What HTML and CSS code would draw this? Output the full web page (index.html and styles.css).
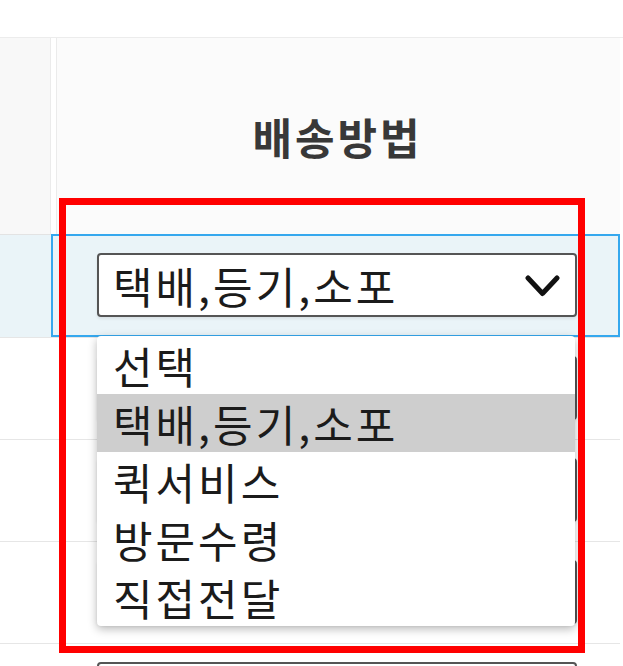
FILE: index.html
```html
<!DOCTYPE html>
<html lang="ko">
<head>
<meta charset="utf-8">
<title>배송방법</title>
<link rel="stylesheet" href="styles.css">
</head>
<body>
<div class="page">
  <div class="table">
    <div class="hcell hcell-left"></div>
    <div class="hcell hcell-main"><span class="htext">배송방법</span></div>

    <div class="cell cell-left row-active-left"></div>
    <div class="cell cell-main row-active">
      <div class="select-wrap">
        <div class="select">
          <span class="select-text">택배,등기,소포</span>
          <svg class="chev" width="35" height="22" viewBox="0 0 35 22"><polyline points="3,3 17.5,18.5 32,3" fill="none" stroke="#111" stroke-width="5" stroke-linecap="round" stroke-linejoin="round"/></svg>
        </div>
        <ul class="dropdown">
          <li class="opt">선택</li>
          <li class="opt opt-hl">택배,등기,소포</li>
          <li class="opt">퀵서비스</li>
          <li class="opt">방문수령</li>
          <li class="opt">직접전달</li>
        </ul>
      </div>
    </div>

    <div class="cell cell-left"></div>
    <div class="cell cell-main"><div class="select"></div></div>

    <div class="cell cell-left"></div>
    <div class="cell cell-main"><div class="select"></div></div>

    <div class="cell cell-left"></div>
    <div class="cell cell-main"><div class="select"></div></div>

    <div class="cell cell-left"></div>
    <div class="cell cell-main"><div class="select"></div></div>
  </div>
  <div class="annot"></div>
</div>
</body>
</html>
```

FILE: styles.css
```css
* { box-sizing: border-box; }
html, body { margin: 0; padding: 0; background: #ffffff; }
body {
  font-family: "Noto Sans CJK KR", "Noto Sans", sans-serif;
  width: 623px;
  height: 666px;
  overflow: hidden;
}
.page { position: relative; width: 623px; height: 666px; padding-top: 37px; }
.table {
  display: grid;
  grid-template-columns: 51px 569px;
  border-top: 1px solid #ececec;
}
.hcell { height: 196px; }
.hcell-left { background: #f8f8f8; border-right: 1px solid #ebebeb; }
.hcell-main {
  background: #fbfbfb;
  border-left: 1px solid #ebebeb;
  margin-left: 5px;
  display: flex;
  align-items: center;
  justify-content: center;
  padding-right: 5px;
}
.htext { font-size: 43px; font-weight: 700; color: #383838; line-height: 1; letter-spacing: 3px; margin-right: -3px; }

.cell { height: 102px; border-top: 1px solid #e6e6e6; background: #fff; }
.cell-main { padding: 18px 39px 0 46px; }
.row-active-left { background: #eaf4f8; height: 103px; border-top: 1px solid #e3e3e3; }
.row-active {
  background: #eaf4f8;
  height: 103px;
  border: 2px solid #35a8ee;
  padding: 17px 41px 0 44px;
}
.select-wrap { position: relative; }
.select {
  height: 64px;
  width: 480px;
  background: #fff;
  border: 2px solid #555;
  border-radius: 4px;
  display: flex;
  align-items: center;
  justify-content: space-between;
  padding: 0 15px 0 14px;
  box-shadow: 0 2px 3px rgba(0,0,0,0.08);
}
.select-text { font-size: 43px; color: #1b1b1b; line-height: 1; letter-spacing: 3px; }
.chev { display: block; margin-top: 2px; }

.dropdown {
  position: absolute;
  left: 0;
  top: calc(100% + 19px);
  width: 478px;
  margin: 0;
  padding: 0;
  list-style: none;
  background: #fff;
  border-radius: 4px;
  box-shadow: 0 3px 10px rgba(0,0,0,0.28);
  z-index: 5;
}
.opt {
  height: 58px;
  display: flex;
  align-items: center;
  padding-left: 16px;
  font-size: 43px;
  color: #1b1b1b;
  line-height: 1;
  letter-spacing: 3px;
}
.opt-hl { background: #cecece; }

.annot {
  position: absolute;
  left: 59px;
  top: 198px;
  width: 526px;
  height: 455px;
  border: 7px solid #ff0000;
  z-index: 10;
  pointer-events: none;
}
```
